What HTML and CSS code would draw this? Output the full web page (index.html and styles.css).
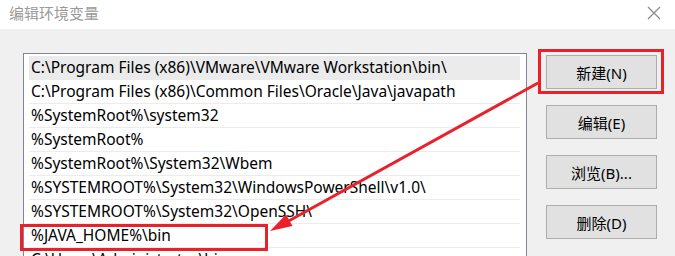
FILE: index.html
```html
<!DOCTYPE html>
<html lang="zh-CN">
<head>
    <meta charset="UTF-8">
    <title>编辑环境变量</title>
    <link rel="stylesheet" href="styles.css">
</head>
<body>
    <div class="window">
        <div class="titlebar">
            <span class="title">编辑环境变量</span>
            <svg class="close" width="14" height="14" viewBox="0 0 14 14">
                <path d="M1 1 L13 13 M13 1 L1 13" stroke="#8a8a8a" stroke-width="1.2" fill="none"/>
            </svg>
        </div>

        <div class="content">
            <div class="list">
                <div class="row selected">C:\Program Files (x86)\VMware\VMware Workstation\bin\</div>
                <div class="row">C:\Program Files (x86)\Common Files\Oracle\Java\javapath</div>
                <div class="row">%SystemRoot%\system32</div>
                <div class="row">%SystemRoot%</div>
                <div class="row">%SystemRoot%\System32\Wbem</div>
                <div class="row">%SYSTEMROOT%\System32\WindowsPowerShell\v1.0\</div>
                <div class="row">%SYSTEMROOT%\System32\OpenSSH\</div>
                <div class="row">%JAVA_HOME%\bin</div>
                <div class="row">C:\Users\Administrator\bin</div>
            </div>

            <div class="buttons">
                <button class="btn">新建(N)</button>
                <button class="btn">编辑(E)</button>
                <button class="btn">浏览(B)...</button>
                <button class="btn">删除(D)</button>
            </div>
        </div>

        <!-- 标注 -->
        <div class="mark mark-new"></div>
        <div class="mark mark-java"></div>
        <svg class="arrow" width="675" height="256" viewBox="0 0 675 256">
            <line x1="538" y1="83" x2="285" y2="223" stroke="#e8212b" stroke-width="3"/>
            <polygon points="270,231 292.5,226 286,214.5" fill="#e8212b"/>
        </svg>
    </div>
</body>
</html>
```

FILE: styles.css
```css
* {
    margin: 0;
    padding: 0;
    box-sizing: border-box;
}

body {
    width: 675px;
    height: 256px;
    overflow: hidden;
    background: #f0f0f0;
    font-family: "Noto Sans", "Noto Sans CJK SC", sans-serif;
}

.window {
    position: relative;
    width: 675px;
    height: 256px;
}

.titlebar {
    height: 29px;
    background: white;
    display: flex;
    justify-content: space-between;
    align-items: center;
    padding: 0 14px 4px 9px;
}

.title {
    font-family: "Noto Sans CJK SC", sans-serif;
    font-size: 15px;
    color: #9a9a9a;
}

.close {
    margin-top: 1px;
}

.content {
    display: flex;
    gap: 19px;
    padding: 24px 0 0 23px;
}

.list {
    width: 504px;
    height: 260px;
    background: white;
    border: 1px solid #828790;
    padding: 2px 6px 0 5px;
}

.row {
    height: 24px;
    line-height: 23px;
    font-size: 15.5px;
    color: black;
    padding-left: 2px;
    border-bottom: 1px solid #ececec;
    white-space: nowrap;
    overflow: hidden;
}

.row.selected {
    background: #ebebeb;
    border-bottom-color: #ebebeb;
}

.buttons {
    display: flex;
    flex-direction: column;
    gap: 16px;
    padding-top: 2px;
}

.btn {
    width: 111px;
    height: 34px;
    background: #e1e1e1;
    border: 1px solid #adadad;
    font-family: "Noto Sans", "Noto Sans CJK SC", sans-serif;
    font-size: 15px;
    color: black;
}

.mark {
    position: absolute;
    border: 3px solid #e8212b;
}

.mark-new {
    left: 538px;
    top: 49px;
    width: 126px;
    height: 45px;
}

.mark-java {
    left: 20px;
    top: 224px;
    width: 248px;
    height: 27px;
}

.arrow {
    position: absolute;
    left: 0;
    top: 0;
}
```
